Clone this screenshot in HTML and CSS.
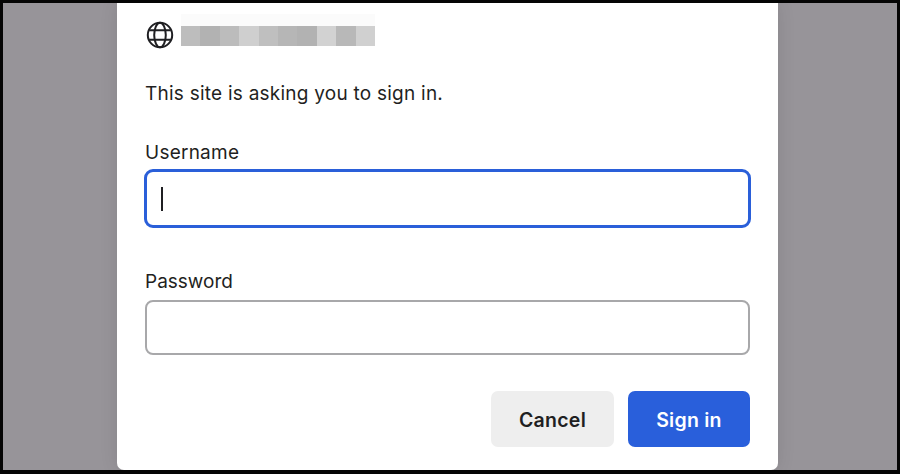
FILE: index.html
```html
<!DOCTYPE html>
<html lang="en">
<head>
<meta charset="utf-8">
<title>Sign in</title>
<link rel="stylesheet" href="styles.css">
</head>
<body>
<div class="frame">
  <div class="dialog">
    <div class="origin">
      <svg class="globe" viewBox="0 0 28 28" width="28" height="28" fill="none" stroke="#1f1f22" stroke-width="2">
        <circle cx="14" cy="14" r="12.2"/>
        <ellipse cx="14" cy="14" rx="5.8" ry="12.2"/>
        <path d="M3.2 9.2h21.6M3.2 18.8h21.6"/>
      </svg>
      <div class="blur">
        <span class="px s1"></span><span class="px s2"></span><span class="px s3"></span><span class="px s4"></span><span class="px s5"></span><span class="px s6"></span><span class="px s7"></span><span class="px s8"></span><span class="px s9"></span><span class="px s10"></span>
      </div>
    </div>
    <p class="message">This site is asking you to sign in.</p>
    <div class="field user">
      <label class="label" for="u">Username</label>
      <div class="input focused" id="u"><span class="caret"></span></div>
    </div>
    <div class="field pass">
      <label class="label" for="p">Password</label>
      <div class="input" id="p"></div>
    </div>
    <div class="actions">
      <button class="btn cancel">Cancel</button>
      <button class="btn primary">Sign in</button>
    </div>
  </div>
</div>
</body>
</html>
```
FILE: styles.css
```css
* { box-sizing: border-box; }
html, body { margin: 0; padding: 0; }
body { width: 900px; height: 474px; overflow: hidden; background: #000; font-family: Inter, "Liberation Sans", sans-serif; }
.frame {
  width: 900px; height: 474px;
  border-style: solid; border-color: #050505;
  border-width: 3px 3px 4px 3px;
  background: #979499;
  overflow: hidden;
  display: flex; justify-content: flex-start;
  padding-left: 113.5px;
}
.dialog {
  width: 661.5px; height: 467px;
  background: #fff;
  border-radius: 0 0 7px 7px;
  box-shadow: 0 0 18px rgba(0, 0, 0, 0.1);
  padding: 19px 28.5px 0 28.5px;
  color: #1f1f22;
}
.origin { display: flex; align-items: center; gap: 7px; height: 26px; }
.globe { flex: none; width: 28px; height: 28px; margin-left: 1px; }
.blur { display: flex; height: 20px; margin-top: 2px; box-shadow: 0 -12px 0 #fbfbfb; }
.px { width: 19.4px; height: 20px; }
.s1 { background: #bdbdbd; }
.s2 { background: #b2b2b2; }
.s3 { background: #bcbcbc; }
.s4 { background: #cfcfcf; }
.s5 { background: #bfbfbf; }
.s6 { background: #b6b6b6; }
.s7 { background: #b2b2b2; }
.s8 { background: #d2d2d2; }
.s9 { background: #b8b8b8; }
.s10 { background: #d0d0d0; }
.message { margin: 34px 0 0; font-size: 19px; line-height: 24px; letter-spacing: 0.24px; }
.field { display: flex; flex-direction: column; }
.user { margin-top: 35px; }
.pass { margin-top: 42px; }
.label { font-size: 19px; line-height: 24px; letter-spacing: 0.24px; }
.pass .label { letter-spacing: 0; }
.input { width: 605px; height: 55px; margin-top: 6px; border: 2px solid #a8a8aa; border-radius: 8px; background: #fff; display: flex; align-items: center; padding-left: 14px; }
.focused { width: 607px; height: 59px; margin-top: 4px; margin-left: -1px; border: 3px solid #2a5fd9; border-radius: 9px; }
.caret { width: 2px; height: 24px; background: #1f1f22; }
.actions { display: flex; justify-content: flex-end; gap: 14px; margin-top: 36px; width: 605px; }
.btn { width: 123px; height: 56px; border: 0; border-radius: 7px; padding: 2px 0 0; font-family: inherit; font-size: 19.5px; font-weight: 600; letter-spacing: 0.25px; }
.cancel { background: #eeeeee; color: #1f1f22; }
.primary { background: #295fdb; color: #fff; width: 122px; }
```
